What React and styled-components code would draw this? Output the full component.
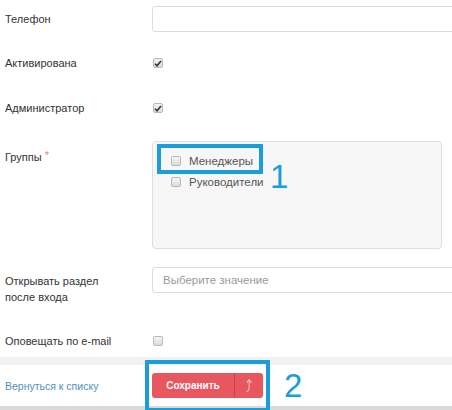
import React from "react";
import styled, { createGlobalStyle } from "styled-components";

const GlobalStyle = createGlobalStyle`
    body {
        margin: 0;
        background: #ffffff;
        font-family: "Liberation Sans", Arial, sans-serif;
        overflow: hidden;
    }
`;

const Page = styled.div`
    position: relative;
    width: 452px;
    height: 410px;
    overflow: hidden;
    display: flex;
    flex-direction: column;
`;

const Row = styled.div`
    display: grid;
    grid-template-columns: 152px 1fr;
    align-items: ${props => props.$align || "center"};
    margin-top: ${props => props.$mt}px;
    min-height: 14px;
`;

const Label = styled.div`
    padding-left: 5px;
    font-size: 11px;
    line-height: ${props => props.$lh || 14}px;
    padding-top: ${props => props.$pt || 0}px;
    color: #333;
`;

const Required = styled.span`
    color: #ef7d84;
    font-size: 11px;
    margin-left: 3px;
    vertical-align: 2px;
`;

const TextInput = styled.div`
    height: 26px;
    width: 320px;
    box-sizing: border-box;
    border: 1px solid #dcdcdc;
    border-radius: 3px;
    background: #fff;
    padding-left: 10px;
    display: flex;
    align-items: center;
    font-size: 11.5px;
    color: #9a9a9a;
`;

const Box = styled.div`
    width: 290px;
    height: 108px;
    box-sizing: border-box;
    border: 1px solid #dedede;
    border-radius: 4px;
    background: #f7f7f7;
    padding: 8px 0 0 18px;
    position: relative;
`;

const Option = styled.div`
    display: flex;
    align-items: center;
    gap: 8px;
    height: 21px;
    font-size: 11.5px;
    color: #555;
`;

const Check = styled.span`
    display: inline-flex;
    align-items: center;
    justify-content: center;
    width: 10px;
    height: 10px;
    box-sizing: border-box;
    border: 1px solid #b9b9b9;
    border-radius: 2px;
    background: linear-gradient(#f4f4f4, #dcdcdc);
    margin-left: ${props => props.$ml || 0}px;
`;

const Footer = styled.div`
    margin-top: 9px;
    border-top: 8px solid #f1f1f1;
    background: #fff;
    display: flex;
    align-items: center;
    padding: 8px 0 8px 0;
    position: relative;
`;

const BackLink = styled.a`
    width: 152px;
    padding-left: 5px;
    box-sizing: border-box;
    font-size: 10.5px;
    color: #4f8fc0;
    text-decoration: none;
`;

const SplitButton = styled.div`
    display: flex;
    height: 25px;
    border-radius: 3px;
    overflow: hidden;
    background: #e8575f;
`;

const ButtonMain = styled.div`
    width: 82px;
    display: flex;
    align-items: center;
    justify-content: center;
    color: #fff;
    font-size: 10px;
    font-weight: bold;
    border-right: 1px solid #cf4149;
`;

const ButtonSide = styled.div`
    width: 28px;
    display: flex;
    align-items: center;
    justify-content: center;
`;

const BottomStrip = styled.div`
    height: 4px;
    background: #dadada;
`;

const Highlight = styled.div`
    position: absolute;
    border: 4px solid #1a9dd9;
    box-sizing: border-box;
    left: ${props => props.$x}px;
    top: ${props => props.$y}px;
    width: ${props => props.$w}px;
    height: ${props => props.$h}px;
    pointer-events: none;
`;

const Marker = styled.div`
    position: absolute;
    left: ${props => props.$x}px;
    top: ${props => props.$y}px;
    font-family: "Liberation Sans", Arial, sans-serif;
    font-size: 33px;
    line-height: 33px;
    color: #1a9dd9;
`;

const Tick = () => (
    <svg width="8" height="7" viewBox="0 0 8 7">
        <path d="M1 3.8 L3 5.8 L7 1" fill="none" stroke="#333" strokeWidth="1.6"/>
    </svg>
);

const Checkbox = ({checked, ml}) => (
    <Check $ml={ml}>{checked && <Tick/>}</Check>
);

const UpArrow = () => (
    <svg width="8" height="15" viewBox="0 0 8 15">
        <path d="M1.5 14 C3.5 13 4.2 11 4.2 8.5 V2" fill="none" stroke="#f6b9bc" strokeWidth="1.2"/>
        <path d="M1.8 4.6 L4.2 1.6 L6.6 4.6" fill="none" stroke="#f6b9bc" strokeWidth="1.2"/>
    </svg>
);

const App = () => (
    <Page>
        <GlobalStyle/>
        <Row $mt={6}>
            <Label $lh={26}>Телефон</Label>
            <TextInput/>
        </Row>
        <Row $mt={24}>
            <Label>Активирована</Label>
            <Checkbox checked ml={1}/>
        </Row>
        <Row $mt={31}>
            <Label>Администратор</Label>
            <Checkbox checked ml={1}/>
        </Row>
        <Row $mt={26} $align="start">
            <Label $pt={7}>Группы<Required>*</Required></Label>
            <Box>
                <Option><Checkbox/>Менеджеры</Option>
                <Option><Checkbox/>Руководители</Option>
                <Highlight $x={4} $y={2} $w={106} $h={30}/>
                <Marker $x={117} $y={18}>1</Marker>
            </Box>
        </Row>
        <Row $mt={18} $align="start">
            <Label $lh={16} $pt={6}>Открывать раздел<br/>после входа</Label>
            <TextInput>Выберите значение</TextInput>
        </Row>
        <Row $mt={29}>
            <Label>Оповещать по e-mail</Label>
            <Checkbox ml={1}/>
        </Row>
        <Footer>
            <BackLink href="#">Вернуться к списку</BackLink>
            <SplitButton>
                <ButtonMain>Сохранить</ButtonMain>
                <ButtonSide><UpArrow/></ButtonSide>
            </SplitButton>
            <Highlight $x={145} $y={-5} $w={125} $h={52}/>
            <Marker $x={284} $y={4}>2</Marker>
        </Footer>
        <BottomStrip/>
    </Page>
);

export default App;
